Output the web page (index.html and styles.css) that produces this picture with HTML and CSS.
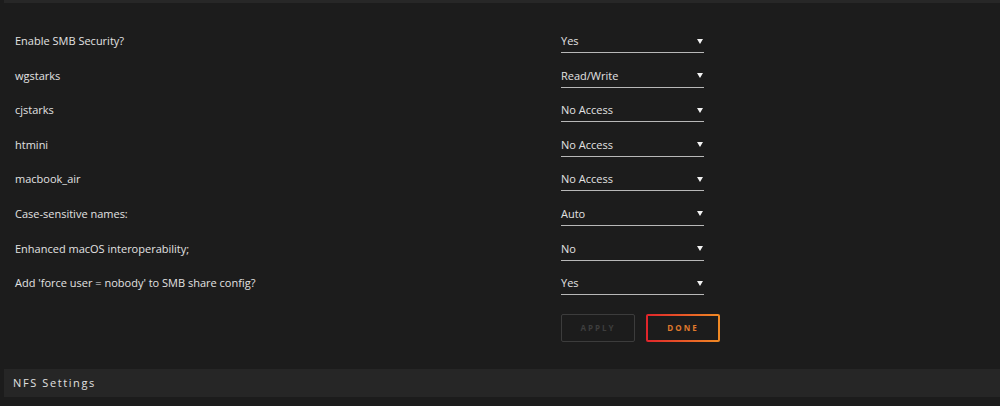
FILE: index.html
```html
<!DOCTYPE html>
<html>
<head>
<meta charset="utf-8">
<link rel="stylesheet" href="styles.css">
</head>
<body>
<div class="top-strip"></div>
<form class="settings">
  <div class="row"><div class="label">Enable SMB Security?</div><div class="select"><span>Yes</span><i class="arrow"></i></div></div>
  <div class="row"><div class="label">wgstarks</div><div class="select"><span>Read/Write</span><i class="arrow"></i></div></div>
  <div class="row"><div class="label">cjstarks</div><div class="select"><span>No Access</span><i class="arrow"></i></div></div>
  <div class="row"><div class="label">htmini</div><div class="select"><span>No Access</span><i class="arrow"></i></div></div>
  <div class="row"><div class="label">macbook_air</div><div class="select"><span>No Access</span><i class="arrow"></i></div></div>
  <div class="row"><div class="label">Case-sensitive names:</div><div class="select"><span>Auto</span><i class="arrow"></i></div></div>
  <div class="row"><div class="label">Enhanced macOS interoperability;</div><div class="select"><span>No</span><i class="arrow"></i></div></div>
  <div class="row"><div class="label">Add 'force user = nobody' to SMB share config?</div><div class="select"><span>Yes</span><i class="arrow"></i></div></div>
  <div class="buttons">
    <div class="btn btn-apply">APPLY</div>
    <div class="btn btn-done"><span>DONE</span></div>
  </div>
</form>
<div class="section-bar">NFS Settings</div>
</body>
</html>
```
FILE: styles.css
```css
html, body {
  margin: 0;
  padding: 0;
  background: #1c1c1c;
  font-family: "Open Sans", "Noto Sans", sans-serif;
  color: #e4e4e4;
  height: 406px;
  overflow: hidden;
}
.top-strip {
  height: 3px;
  margin-left: 4px;
  background: #272727;
}
.settings {
  padding-top: 29px;
  margin: 0;
}
.row {
  display: flex;
  align-items: flex-start;
  height: 34.6px;
}
.label {
  width: 546px;
  padding-left: 15px;
  font-size: 11px;
  line-height: 18px;
  color: #e2e2e2;
}
.select {
  width: 143px;
  display: flex;
  justify-content: space-between;
  align-items: center;
  height: 18px;
  padding-bottom: 2px;
  border-bottom: 1px solid #b8b8b8;
  font-size: 11px;
  line-height: 18px;
  color: #e2e2e2;
}
.arrow {
  width: 0;
  height: 0;
  margin-right: 1px;
  border-left: 3px solid transparent;
  border-right: 3px solid transparent;
  border-top: 5px solid #f2f2f2;
}
.buttons {
  display: flex;
  gap: 11px;
  padding-left: 561px;
  margin-top: 5px;
}
.btn {
  box-sizing: border-box;
  width: 74px;
  height: 28px;
  border-radius: 2px;
  display: flex;
  align-items: center;
  justify-content: center;
  font-size: 8px;
  font-weight: 700;
  letter-spacing: 2px;
}
.btn-apply {
  border: 1px solid #3c3c3c;
  color: #3e3e3e;
}
.btn-done {
  border: 2px solid transparent;
  background: linear-gradient(#1c1c1c, #1c1c1c) padding-box,
              linear-gradient(90deg, #e0242b, #f08a24) border-box;
  color: #e07a2c;
}
.section-bar {
  margin-top: 27px;
  margin-left: 4px;
  height: 28px;
  background: #262626;
  padding-left: 9px;
  font-size: 11px;
  line-height: 28px;
  letter-spacing: 1.6px;
  color: #e0e0e0;
}
```
